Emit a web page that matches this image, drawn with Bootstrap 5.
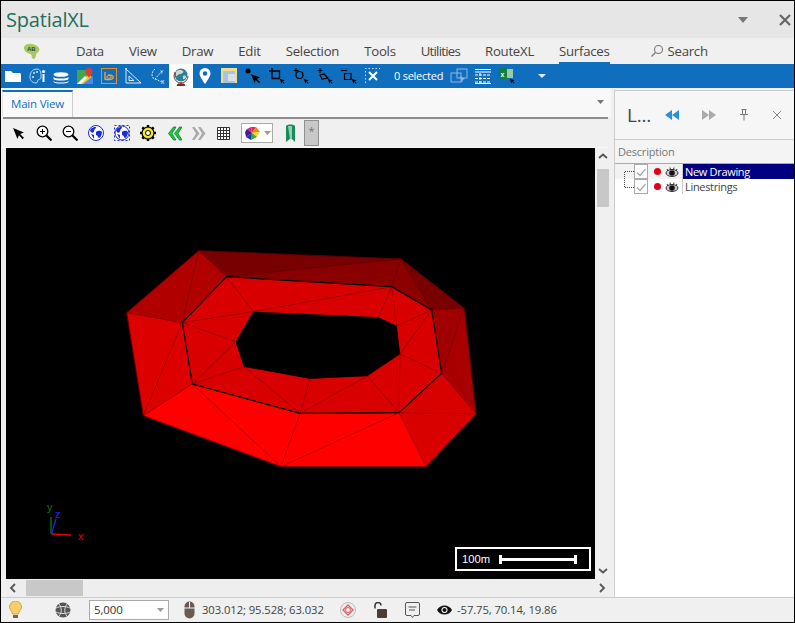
<!DOCTYPE html>
<html lang="en">
<head>
    <meta charset="UTF-8">
    <title>SpatialXL</title>
    <link href="https://cdn.jsdelivr.net/npm/bootstrap@5.3.0/dist/css/bootstrap.min.css" rel="stylesheet">
    <style>
        html, body { margin: 0; height: 623px; width: 795px; overflow: hidden; background: #f0f0f0; }
        body { font-family: "Open Sans", "Liberation Sans", sans-serif; font-size: 12px; color: #444; }
        svg { display: block; }
        .app-window { width: 795px; height: 623px; border: 1px solid #000; }
        .title-bar { height: 37px; background: #e6e6e6; padding-left: 5px; padding-right: 3px; }
        .app-title { font-size: 20px; color: #1f6f5c; letter-spacing: -.2px; }
        .title-drop { margin-left: auto; margin-right: 31px; }
        .ribbon-tabs { height: 26px; background: #f0f0f0; padding-left: 22px; }
        .ribbon-logo { width: 53px; }
        .ribbon-tab-row { gap: 25px; }
        .ribbon-tab { font-size: 13.2px; color: #444; height: 26px; line-height: 27px; letter-spacing: -.25px; }
        .ribbon-tab.is-on { border-bottom: 2px solid #106ebe; }
        .ribbon-tab.is-tight { letter-spacing: -.75px; }
        .ribbon-search { margin-left: 40px; }
        .blue-bar { height: 24px; background: #106ebe; }
        .blue-btn { width: 24px; height: 24px; }
        .blue-btn.is-on { background: #fff; }
        .blue-count { color: #fff; font-size: 11px; width: 48px; margin: 0 5px 0 9px; letter-spacing: -.25px; white-space: nowrap; }
        .work-area { height: 509px; }
        .left-col { width: 610px; }
        .tab-strip { height: 29px; background: #f8f8f8; padding-top: 2px; padding-left: 1px; padding-right: 7px; }
        .view-tab { width: 71px; height: 27px; background: #fafafa; border-top: 2px solid #106ebe; border-right: 1px solid #ccc; border-left: 1px solid #e4e4e4; color: #106ebe; font-size: 11.5px; line-height: 24px; text-align: center; letter-spacing: -.2px; }
        .map-tools { height: 31px; margin-left: 2px; margin-right: 3px; border-top: 2px solid #8c8c8c; border-bottom: 1px solid #fafafa; padding-left: 2px; }
        .map-btn { width: 26px; height: 28px; }
        .map-btn.is-w24 { width: 24px; }
        .map-btn.is-w25 { width: 25px; }
        .map-btn.is-w27 { width: 27px; }
        .color-drop { width: 32px; height: 20px; margin-left: 5px; margin-right: 4px; background: #fff; border: 1px solid #aaa; padding-left: 3px; }
        .more-btn { width: 15px; height: 26px; background: #c8c8c8; border: 1px solid #909090; color: #777; font-size: 11px; line-height: 20px; text-align: center; }
        .view-row { height: 431px; margin-left: 5px; }
        .map-canvas { width: 589px; height: 431px; background: #000; }
        .scale-box { position: absolute; left: 449px; top: 399px; width: 136px; height: 24px; border: 2px solid #fff; color: #fff; font-size: 11.2px; line-height: 18px; padding-left: 5px; font-family: "Liberation Sans", sans-serif; }
        .scale-line { width: 78px; height: 3px; background: #fff; margin-left: 9px; position: relative; }
        .scale-line::before, .scale-line::after { content: ""; position: absolute; top: -3px; width: 3px; height: 9px; background: #fff; }
        .scale-line::before { left: 0; }
        .scale-line::after { right: 0; }
        .v-scroll { width: 16px; height: 431px; padding-top: 2px; }
        .v-thumb { width: 12px; height: 38px; background: #c8c8c8; margin: 10px 0 0 2px; }
        .h-scroll { height: 18px; margin-left: 5px; width: 605px; background: #eee; }
        .h-thumb { width: 57px; height: 16px; background: #c8c8c8; margin-left: 9px; }
        .side-panel { width: 180px; margin-left: 3px; margin-top: 2px; background: #fff; border-left: 1px solid #ccc; border-top: 1px solid #ccc; }
        .panel-head { height: 49px; background: #f6f6f6; border-bottom: 1px solid #ccc; padding-left: 12px; }
        .panel-name { font-size: 19px; color: #444; width: 27.5px; letter-spacing: -.2px; white-space: nowrap; }
        .panel-btn { width: 35px; }
        .panel-btn.is-gap { margin-left: 2px; }
        .panel-btn.is-back { margin-left: -2px; }
        .col-label { height: 24px; background: #f4f4f4; border-bottom: 1px solid #aaa; color: #777; font-size: 11px; line-height: 23px; padding-left: 3px; letter-spacing: -.2px; }
        .tree-list { position: relative; }
        .tree-row { height: 15px; padding-left: 19px; font-size: 11px; line-height: 15px; letter-spacing: -.32px; color: #444; }
        .tree-row.is-first { background: #f2f2f2; }
        .tree-check { width: 14px; height: 15px; border: 1px solid #aaa; background: #fff; margin-right: 6px; }
        .tree-dot { width: 7px; height: 7px; border-radius: 50%; background: #e00010; margin-right: 1px; }
        .tree-eye { width: 20px; }
        .tree-name { flex: 1; height: 15px; padding-left: 2px; border-left: 1px solid #ccc; }
        .tree-name.is-on { background: #000080; color: #fff; }
        .tree-lines { position: absolute; left: 9px; top: 7px; }
        .status-bar { height: 25px; border-top: 1px solid #ccc; background: #f0f0f0; font-size: 11.3px; color: #444; letter-spacing: -.1px; }
        .zoom-box { width: 80px; height: 20px; background: #fff; border: 1px solid #aaa; padding-left: 4px; padding-right: 4px; font-size: 11.5px; color: #333; margin-left: 18px; }
        .stat-mouse { margin-left: 15px; }
        .stat-coords { margin-left: 7px; width: 122px; white-space: nowrap; }
        .stat-target { margin-left: 16px; }
        .stat-lock { margin-left: 17px; }
        .stat-note { margin-left: 17px; }
        .stat-eye { margin-left: 17px; }
        .stat-view { margin-left: 5px; white-space: nowrap; }
        .stat-bulb { margin-left: 7px; }
        .stat-globe { margin-left: 32px; }
        .tab-drop { margin-top: 10px; }
        .blue-drop { margin-left: 19px; }
        .v-up { margin-top: 3px; }
        .v-down { margin-bottom: 5px; }
        .h-left { margin-left: 2px; }
        .h-right { margin-right: 4px; }
    </style>
</head>
<body>
    <svg width="0" height="0" class="position-absolute">
        <symbol id="arrowBlack" viewBox="0 0 12 12"><path d="M1 1l10 4-3.500 1.500L11 10l-1.200 1.200-3.400-3.500L5 11z" fill="#000"/></symbol>
        <symbol id="chevL" viewBox="0 0 16 12"><path d="M8 1L1 6l7 5zM15 1L8 6l7 5z" /></symbol>
        <symbol id="eyeIcon" viewBox="0 0 14 12"><ellipse cx="7" cy="7" rx="6" ry="3.500" fill="#ccc" stroke="#333"/><circle cx="7" cy="7" r="2.800" fill="#111"/><path d="M2 3l1 2M5 1.500l.6 2.500M9 1.500L8.400 4M12 3l-1 2" stroke="#333" fill="none"/></symbol>
        <symbol id="checkIcon" viewBox="0 0 12 12"><path d="M2 6.500l3 3L10.500 3" stroke="#aaa" stroke-width="1.200" fill="none"/></symbol>
    </svg>

    <div class="app-window d-flex flex-column">
        <!-- title -->
        <div class="title-bar d-flex align-items-center">
            <div class="app-title">SpatialXL</div>
            <svg class="title-drop" width="10" height="6"><path d="M0 0h10L5 6z" fill="#777"/></svg>
            <svg width="12" height="12"><path d="M1 1l10 10M11 1L1 11" stroke="#666" stroke-width="2.200"/></svg>
        </div>

        <!-- ribbon tabs -->
        <div class="ribbon-tabs d-flex align-items-center">
            <div class="ribbon-logo">
                <svg width="18" height="18"><path d="M1 5c1-3 5-4 8-3 2 0 3 1 5 2 2 1 3 3 2 5-1 2-3 2-3 4s-1 4-2.500 4c-1 0-2-2-2-4 0-1-2-1-4-2-2-1-4-3-3.500-6z" fill="#a8c860"/><text x="4" y="8.500" font-size="6" font-weight="700" fill="#345" font-family="Liberation Sans">AB</text></svg>
            </div>
            <div class="d-flex ribbon-tab-row">
                <div class="ribbon-tab">Data</div>
                <div class="ribbon-tab">View</div>
                <div class="ribbon-tab">Draw</div>
                <div class="ribbon-tab">Edit</div>
                <div class="ribbon-tab">Selection</div>
                <div class="ribbon-tab">Tools</div>
                <div class="ribbon-tab is-tight">Utilities</div>
                <div class="ribbon-tab">RouteXL</div>
                <div class="ribbon-tab is-on">Surfaces</div>
            </div>
            <div class="ribbon-search d-flex align-items-center gap-1">
                <svg width="14" height="14"><circle cx="8.500" cy="5.500" r="4" fill="none" stroke="#777" stroke-width="1.100"/><path d="M5.500 8.500L1.500 12.500" stroke="#777" stroke-width="1.300"/></svg>
                <div class="ribbon-tab">Search</div>
            </div>
        </div>

        <!-- blue toolbar -->
        <div class="blue-bar d-flex align-items-center">
            <div class="blue-btn d-flex align-items-center justify-content-center"><svg width="16" height="12"><path d="M0 1h6l2 2h7l1 1v8H0z" fill="#fff"/></svg></div>
            <div class="blue-btn d-flex align-items-center justify-content-center"><svg width="17" height="16"><path d="M8 1C3 1 1 5 1 9s3 6 6 6c2 0 1-2 2-3s3 0 3-3 0-8-4-8z" fill="none" stroke="#cfe0f2" stroke-width=".9"/><circle cx="5" cy="5" r="1" fill="#dbe8f5"/><circle cx="8" cy="4" r="1" fill="#dbe8f5"/><circle cx="4" cy="9" r="1" fill="#dbe8f5"/><path d="M14.500 6v8" stroke="#fff" stroke-width="2"/><circle cx="14.500" cy="3.500" r="1.600" fill="#fff"/></svg></div>
            <div class="blue-btn d-flex align-items-center justify-content-center"><svg width="16" height="12" class="mt-1"><ellipse cx="8" cy="2.500" rx="7.500" ry="2.300" fill="#fff"/><path d="M.5 5c1.500 2 13.500 2 15 0v2c-1.500 2-13.500 2-15 0zM.5 9c1.500 2 13.500 2 15 0v1c-1.500 2-13.500 2-15 0z" fill="#fff"/></svg></div>
            <div class="blue-btn d-flex align-items-center justify-content-center"><svg width="16" height="16"><path d="M0 2h12v14H0z" fill="#3da854"/><path d="M0 16L12 6l4 4v6z" fill="#f5c518"/><path d="M6 16l10-8v8z" fill="#4a88e8"/><path d="M0 16L8 8l2 2-6 6z" fill="#fff"/><path d="M12 0a3.500 3.500 0 0 1 3.500 3.500c0 2.500-3.500 6-3.500 6s-3.500-3.500-3.500-6A3.500 3.500 0 0 1 12 0z" fill="#e23c30"/></svg></div>
            <div class="blue-btn d-flex align-items-center justify-content-center"><svg width="16" height="16"><rect x=".5" y=".5" width="15" height="15" fill="none" stroke="#f08c1e"/><path d="M4 4v7c2 1 7 1 8-1 1-2-1-3-5-3" fill="none" stroke="#f3a23c" stroke-width="1.400"/><ellipse cx="8" cy="9" rx="2.300" ry="1.300" fill="none" stroke="#f3a23c"/></svg></div>
            <div class="blue-btn d-flex align-items-center justify-content-center"><svg width="16" height="16"><path d="M1 0v15h15L1 1z" fill="none" stroke="#dbe8f5"/><path d="M4 8v4.500h5z" fill="none" stroke="#dbe8f5"/></svg></div>
            <div class="blue-btn d-flex align-items-center justify-content-center"><svg width="16" height="16"><path d="M6 1C2 4 2 10 6 11s5 3 7 3M13 3l-7 8" fill="none" stroke="#dbe8f5" stroke-dasharray="2 1"/><text x="11" y="6" font-size="5" fill="#fff" font-family="Liberation Sans">Y</text><text x="12" y="16" font-size="5" fill="#fff" font-family="Liberation Sans">X</text></svg></div>
            <div class="blue-btn is-on d-flex align-items-center justify-content-center"><svg width="16" height="19"><circle cx="8" cy="8" r="6.500" fill="#2a7f9a"/><path d="M3 5c2-3 6-2 7-1s-1 3-3 3-3 3-4 2zM10 9c2-1 3 0 3 1s-2 3-3 2z" fill="#d5d9c8"/><path d="M2 5L1 9a7 7 0 0 0 14 0" fill="none" stroke="#7a4030"/><path d="M5 17h6l1 1.500H4z M8 15v2" fill="#7a2a2a" stroke="#7a2a2a"/></svg></div>
            <div class="blue-btn d-flex align-items-center justify-content-center"><svg width="12" height="16"><path fill-rule="evenodd" d="M6 0a5.500 5.500 0 0 1 5.500 5.500C11.500 9 6 16 6 16S.5 9 .5 5.500A5.500 5.500 0 0 1 6 0zm0 3.200a2.300 2.300 0 1 0 0 4.600 2.300 2.300 0 0 0 0-4.600z" fill="#fff"/></svg></div>
            <div class="blue-btn d-flex align-items-center justify-content-center"><svg width="16" height="16"><path d="M0 0h16v15H14V3H2v12H0z" fill="#f3dc8a"/><path d="M2 3h12v12H2z" fill="#a9c4de"/><path d="M7 6h7v7H7z" fill="#d8e0e8"/></svg></div>
            <div class="blue-btn d-flex align-items-center justify-content-center"><svg width="16" height="16"><circle cx="3" cy="3" r="2.500" fill="#000"/><use href="#arrowBlack" x="5" y="5" width="11" height="11"/></svg></div>
            <div class="blue-btn d-flex align-items-center justify-content-center"><svg width="16" height="16"><path d="M3 0v10.500h8M0 3h10.500v7" fill="none" stroke="#000" stroke-width="1.300"/><use href="#arrowBlack" x="10" y="10" width="6" height="6"/></svg></div>
            <div class="blue-btn d-flex align-items-center justify-content-center"><svg width="16" height="16"><path d="M3 0v5M.5 2.500h5" stroke="#000"/><circle cx="6.500" cy="7" r="3.500" fill="none" stroke="#000" stroke-width="1.200"/><use href="#arrowBlack" x="10" y="10" width="6" height="6"/></svg></div>
            <div class="blue-btn d-flex align-items-center justify-content-center"><svg width="16" height="16"><path d="M3 0v5M.5 2.500h5" stroke="#000"/><path d="M3 7l4-1 4 4-6 1z" fill="none" stroke="#000" stroke-width="1.200"/><use href="#arrowBlack" x="10" y="10" width="6" height="6"/></svg></div>
            <div class="blue-btn d-flex align-items-center justify-content-center"><svg width="16" height="16"><path d="M0 2.500h6" stroke="#000" stroke-width="1.200"/><path d="M3.500 5.500h6.500v6H3.500z" fill="none" stroke="#000" stroke-width="1.200"/><use href="#arrowBlack" x="10" y="10" width="6" height="6"/></svg></div>
            <div class="blue-btn d-flex align-items-center justify-content-center"><svg width="16" height="16"><path d="M.5 15V.5H15" fill="none" stroke="#fff" stroke-width=".8" stroke-dasharray="1.500 2"/><path d="M4 4l8 8M12 4l-8 8" stroke="#fff" stroke-width="2"/></svg></div>
            <div class="blue-count">0 selected</div>
            <div class="blue-btn d-flex align-items-center justify-content-center"><svg width="18" height="16"><rect x="7" y="1" width="10" height="9" fill="none" stroke="#8fb8de"/><rect x="1" y="5" width="10" height="9" fill="none" stroke="#8fb8de"/><path d="M10 8l5 3-2 .8-1 3z" fill="#8fb8de"/></svg></div>
            <div class="blue-btn d-flex align-items-center justify-content-center"><svg width="16" height="15"><path d="M0 .5h16M0 3h16" stroke="#fff" stroke-width="1.200"/><path d="M0 6h16M0 9.500h16M0 13h16M5 4v10" stroke="#fff" stroke-dasharray="3 1"/><path d="M0 14.500h16" stroke="#fff"/></svg></div>
            <div class="blue-btn d-flex align-items-center justify-content-center"><svg width="16" height="16"><rect x="0" y="0" width="8" height="11" fill="#108040"/><rect x="8" y="1" width="6" height="9" fill="#9ccaa8"/><text x="1.500" y="8.500" font-size="7" font-weight="700" fill="#fff" font-family="Liberation Sans">x</text><use href="#arrowBlack" x="10" y="10" width="6" height="6"/></svg></div>
            <svg class="blue-drop" width="8" height="4"><path d="M0 0h8L4 4z" fill="#dbe8f5"/></svg>
        </div>

        <!-- main + side panel -->
        <div class="work-area d-flex">
            <div class="left-col d-flex flex-column">
                <div class="tab-strip d-flex">
                    <div class="view-tab">Main View</div>
                    <svg class="ms-auto tab-drop" width="7" height="4"><path d="M0 0h7L3.500 4z" fill="#777"/></svg>
                </div>

                <div class="map-tools d-flex align-items-center">
                    <div class="map-btn d-flex align-items-center justify-content-center"><svg width="13" height="13"><use href="#arrowBlack" width="13" height="13"/></svg></div>
                    <div class="map-btn d-flex align-items-center justify-content-center"><svg width="16" height="16"><circle cx="6.500" cy="6.500" r="5.300" fill="#fff" stroke="#000" stroke-width="1.300"/><path d="M4 6.500h5M6.500 4v5" stroke="#000"/><path d="M10.500 10.500l5 5" stroke="#000" stroke-width="2.200"/></svg></div>
                    <div class="map-btn d-flex align-items-center justify-content-center"><svg width="16" height="16"><circle cx="6.500" cy="6.500" r="5.300" fill="#fff" stroke="#000" stroke-width="1.300"/><path d="M4 6.500h5" stroke="#000"/><path d="M10.500 10.500l5 5" stroke="#000" stroke-width="2.200"/></svg></div>
                    <div class="map-btn d-flex align-items-center justify-content-center"><svg width="16" height="16"><circle cx="8" cy="8" r="7.500" fill="#fff" stroke="#1a2cd8"/><path d="M2 5c2-3 4-3 6-3 0 2-2 2-2 4S3 9 2 5zM8 7c3-2 5-1 6 0 0 3-2 6-3 6s-1-3-3-3zM3 9l3 1 0 4z" fill="#1a2cd8"/></svg></div>
                    <div class="map-btn d-flex align-items-center justify-content-center"><svg width="16" height="16"><rect x=".5" y=".5" width="15" height="15" fill="none" stroke="#1a2cd8" stroke-dasharray="2 2"/><circle cx="8" cy="8" r="7" fill="#fff" stroke="#1a2cd8"/><path d="M2 5c2-3 4-3 6-3 0 2-2 2-2 4S3 9 2 5zM8 7c3-2 5-1 6 0 0 3-2 6-3 6s-1-3-3-3zM3 9l3 1 0 4z" fill="#1a2cd8"/></svg></div>
                    <div class="map-btn d-flex align-items-center justify-content-center"><svg width="16" height="16"><path d="M8 0v3M8 13v3M0 8h3M13 8h3M2.300 2.300l2 2M11.700 11.700l2 2M13.700 2.300l-2 2M4.300 11.700l-2 2" stroke="#000" stroke-width="2.400"/><circle cx="8" cy="8" r="6" fill="#f6e81c" stroke="#000" stroke-width="1.200"/><circle cx="8" cy="8" r="2.500" fill="#fff" stroke="#000"/></svg></div>
                    <div class="map-btn d-flex align-items-center justify-content-center"><svg width="15" height="15"><path d="M6.500 1L1.500 7.500l5 6.500h2.500L5 7.500 9 1zM12.500 1l-5 6.500 5 6.500H15l-4-6.500L15 1z" fill="#18d030" stroke="#063" stroke-width=".7"/></svg></div>
                    <div class="map-btn is-w24 d-flex align-items-center justify-content-center"><svg width="15" height="15"><path d="M8.500 1l5 6.500-5 6.500H6l4-6.500L6 1zM2.500 1l5 6.500-5 6.500H0l4-6.500L0 1z" fill="#aaa"/></svg></div>
                    <div class="map-btn is-w25 d-flex align-items-center justify-content-center"><svg width="13" height="13"><path d="M.5.5h12v12H.5zM3.500.5v12M6.500.5v12M9.500.5v12M.5 3.500h12M.5 6.500h12M.5 9.500h12" stroke="#333" fill="#fff"/></svg></div>
                    <div class="color-drop d-flex align-items-center gap-1"><svg width="15" height="14"><path d="M7 7L2 3l4-2z" fill="#d020a0"/><path d="M7 7L6 1h5z" fill="#e03030"/><path d="M7 7l4-6 4 5z" fill="#f08020"/><path d="M7 7l8-1-3 5z" fill="#e8e020"/><path d="M7 7l5 4-6 3z" fill="#30b030"/><path d="M7 7l-1 7-5-3z" fill="#2030c0"/><path d="M7 7l-6 4-1-5 2-3z" fill="#402080"/></svg><svg width="7" height="4"><path d="M0 0h7L3.500 4z" fill="#999"/></svg></div>
                    <div class="map-btn is-w27 d-flex align-items-center justify-content-center"><svg width="11" height="18"><path d="M1 2c1-2 8-2 9 0v16l-4-4-5 4z" fill="#1a8a5a"/><path d="M3 2h4v12l-2 1z" fill="#8ed0b0"/></svg></div>
                    <div class="more-btn">*</div>
                </div>

                <div class="view-row d-flex">
                    <div class="map-canvas position-relative">
                        <svg width="589" height="431" viewBox="6 148 589 431" id="meshView"></svg>
                        <div class="scale-box d-flex align-items-center">100m<span class="scale-line"></span></div>
                    </div>
                    <div class="v-scroll d-flex flex-column">
                        <svg class="mx-auto v-up" width="10" height="6"><path d="M1 5l4-3.500L9 5" fill="none" stroke="#555" stroke-width="1.800"/></svg>
                        <div class="v-thumb"></div>
                        <svg class="mx-auto mt-auto v-down" width="10" height="6"><path d="M1 1l4 3.500L9 1" fill="none" stroke="#555" stroke-width="1.800"/></svg>
                    </div>
                </div>
                <div class="h-scroll d-flex align-items-center">
                    <svg class="h-left" width="9" height="10"><path d="M7 1L3 5l4 4" fill="none" stroke="#555" stroke-width="1.800"/></svg>
                    <div class="h-thumb"></div>
                    <svg class="ms-auto h-right" width="9" height="10"><path d="M2 1l4 4-4 4" fill="none" stroke="#555" stroke-width="1.800"/></svg>
                </div>
            </div>

            <div class="side-panel d-flex flex-column">
                <div class="panel-head d-flex align-items-center">
                    <div class="panel-name">L...</div>
                    <div class="panel-btn d-flex justify-content-center"><svg width="16" height="12" fill="#2a90dc"><use href="#chevL"/></svg></div>
                    <div class="panel-btn is-gap d-flex justify-content-center"><svg width="16" height="12" fill="#aaa" transform="scale(-1 1)"><use href="#chevL"/></svg></div>
                    <div class="panel-btn d-flex justify-content-center"><svg width="10" height="12"><path d="M2.500.5h5M3.500.5v5M6.500.5v5M1 5.500h8M5 5.500v6" stroke="#777" fill="none"/></svg></div>
                    <div class="panel-btn is-back d-flex justify-content-center"><svg width="10" height="10"><path d="M1 1l8 8M9 1L1 9" stroke="#888"/></svg></div>
                </div>
                <div class="col-label">Description</div>
                <div class="tree-list">
                    <div class="tree-row is-first d-flex align-items-center">
                        <div class="tree-check"><svg width="12" height="13"><use href="#checkIcon" width="12" height="12" y="1"/></svg></div>
                        <div class="tree-dot"></div>
                        <svg class="tree-eye" width="20" height="12"><use href="#eyeIcon" x="3" width="14" height="12"/></svg>
                        <div class="tree-name is-on">New Drawing</div>
                    </div>
                    <div class="tree-row d-flex align-items-center">
                        <div class="tree-check"><svg width="12" height="13"><use href="#checkIcon" width="12" height="12" y="1"/></svg></div>
                        <div class="tree-dot"></div>
                        <svg class="tree-eye" width="20" height="12"><use href="#eyeIcon" x="3" width="14" height="12"/></svg>
                        <div class="tree-name">Linestrings</div>
                    </div>
                    <svg class="tree-lines" width="10" height="18"><path d="M10 .5H.5v16H10" fill="none" stroke="#444" stroke-dasharray="1 1"/></svg>
                </div>
            </div>
        </div>

        <!-- status -->
        <div class="status-bar d-flex align-items-center">
            <svg class="stat-bulb" width="15" height="18"><path d="M7.500 0a6 6 0 0 1 6 6c0 3-3 4-3 7h-6c0-3-3-4-3-7a6 6 0 0 1 6-6z" fill="#f8cf6a" stroke="#e0a030"/><path d="M5 14h5v3H5z" fill="#666"/></svg>
            <svg class="stat-globe" width="16" height="16"><circle cx="8" cy="8" r="7.500" fill="#555"/><path d="M1 6c4-2 10-2 14 0M1 10c4 2 10 2 14 0M4 2c3 4 3 9 0 12M12 2c-3 4-3 9 0 12" fill="none" stroke="#ddd"/></svg>
            <div class="zoom-box d-flex align-items-center justify-content-between">5,000<svg width="7" height="4"><path d="M0 0h7L3.500 4z" fill="#999"/></svg></div>
            <svg class="stat-mouse" width="11" height="18"><rect x=".5" y=".5" width="10" height="17" rx="5" fill="#6a5a50"/><path d="M5.500 1v6M0 7h11" stroke="#f0f0f0"/></svg>
            <div class="stat-coords">303.012; 95.528; 63.032</div>
            <svg class="stat-target" width="16" height="16"><circle cx="8" cy="8" r="7.500" fill="#eee" stroke="#bbb"/><path d="M8 3l5 5-5 5-5-5z" fill="none" stroke="#e06060" stroke-width="1.300"/><circle cx="8" cy="8" r="2.500" fill="none" stroke="#e06060"/></svg>
            <svg class="stat-lock" width="15" height="16"><path d="M2 7V4a3 3 0 0 1 6 0" fill="none" stroke="#333" stroke-width="1.500" transform="translate(0 -.5)"/><rect x="4" y="7" width="10" height="9" rx="1" fill="#4a3c34"/></svg>
            <svg class="stat-note" width="15" height="17"><path d="M2 .5h11a1.500 1.500 0 0 1 1.500 1.500v10a1.500 1.500 0 0 1-1.500 1.500H9l-1.500 2-1.500-2H2A1.500 1.500 0 0 1 .5 12V2A1.500 1.500 0 0 1 2 .5z" fill="none" stroke="#555"/><path d="M3.500 5h8M4 8h6" stroke="#555"/></svg>
            <svg class="stat-eye" width="15" height="10"><path d="M0 5c3-6 12-6 15 0-3 6-12 6-15 0z" fill="#111"/><circle cx="7.500" cy="5" r="3" fill="#fff"/><circle cx="7.500" cy="5" r="2" fill="#111"/></svg>
            <div class="stat-view">-57.75, 70.14, 19.86</div>
        </div>
    </div>

    <script src="https://cdn.jsdelivr.net/npm/bootstrap@5.3.0/dist/js/bootstrap.bundle.min.js"></script>
    <script>
        // mesh vertices, in page pixels
        const p = {
            A:[198.7,250.7], B:[401,259], C:[464.3,308.3], D:[476,414], E:[426,466.7], F:[281,466.7], G:[143.3,415.7], H:[126.7,312.7],
            a:[226.7,276.7], b:[391.7,286.7], c:[431.7,310], d:[441.7,373.3], e:[399,412.7], f:[300,413.3], g:[192.3,384], h:[182.3,322.7],
            i:[253.3,311.7], j:[378.3,317.3], k:[396.7,326], l:[400,354], m:[367.3,376], n:[310,378.7], o:[244,366.7], q:[235.7,341.7]
        };
        const tris = [
            ["AaB","#780000"], ["aBb","#8a0000"], ["Bbc","#8c0000"], ["BCc","#780000"], ["cCd","#a00000"], ["CDd","#a80000"],
            ["dDe","#d90000"], ["eDE","#d90000"], ["eEF","#ff0000"], ["feF","#ff0000"], ["gfF","#ff0000"], ["gFG","#ff0000"],
            ["hgG","#dc0000"], ["hGH","#dc0000"], ["hHA","#b00000"], ["hAa","#b00000"],
            ["hai","#d80000"], ["hiq","#d80000"], ["hqg","#d80000"], ["gqo","#d80000"], ["gof","#d80000"], ["onf","#d80000"],
            ["nmf","#d80000"], ["fme","#d80000"], ["mle","#d80000"], ["lde","#d80000"], ["lcd","#d80000"], ["kcl","#d80000"],
            ["bkc","#d80000"], ["bjk","#d80000"], ["abi","#d80000"], ["bji","#d80000"]
        ];
        const pts = s => [...s].map(c => p[c].join(",")).join(" ");
        let out = "";
        // fill first, so the seams stay closed, then a faint wire on top
        tris.forEach(t => {
            out += `<polygon points="${pts(t[0])}" fill="${t[1]}" stroke="${t[1]}" stroke-width=".5"/>`;
        });
        tris.forEach(t => {
            out += `<polygon points="${pts(t[0])}" fill="none" stroke="#400000" stroke-opacity=".38" stroke-width=".4"/>`;
        });
        out += `<polygon points="${pts("abcdefgh")}" fill="none" stroke="#000" stroke-width="1.200"/>`;
        out += `<polygon points="${pts("ABCDEFGH")}" fill="none" stroke="#500" stroke-width=".8"/>`;
        out += `<polygon points="${pts("ijklmnoq")}" fill="#000"/>`;
        // axis gizmo
        out += `<path d="M51 534V517" stroke="#0a6a0a" stroke-width="1.500"/><path d="M51.500 534L56 519" stroke="#1a2cff" stroke-width="1.200"/><path d="M51.500 534L71 535" stroke="#e00000" stroke-width="1.500"/>`;
        out += `<text x="47" y="511" font-size="11" fill="#0a7a0a" font-family="Liberation Sans">y</text><text x="55" y="518" font-size="11" fill="#1a2cff" font-family="Liberation Sans">z</text><text x="78" y="540" font-size="11" fill="#e00000" font-family="Liberation Sans">x</text>`;
        document.getElementById("meshView").innerHTML = out;
    </script>
</body>
</html>
